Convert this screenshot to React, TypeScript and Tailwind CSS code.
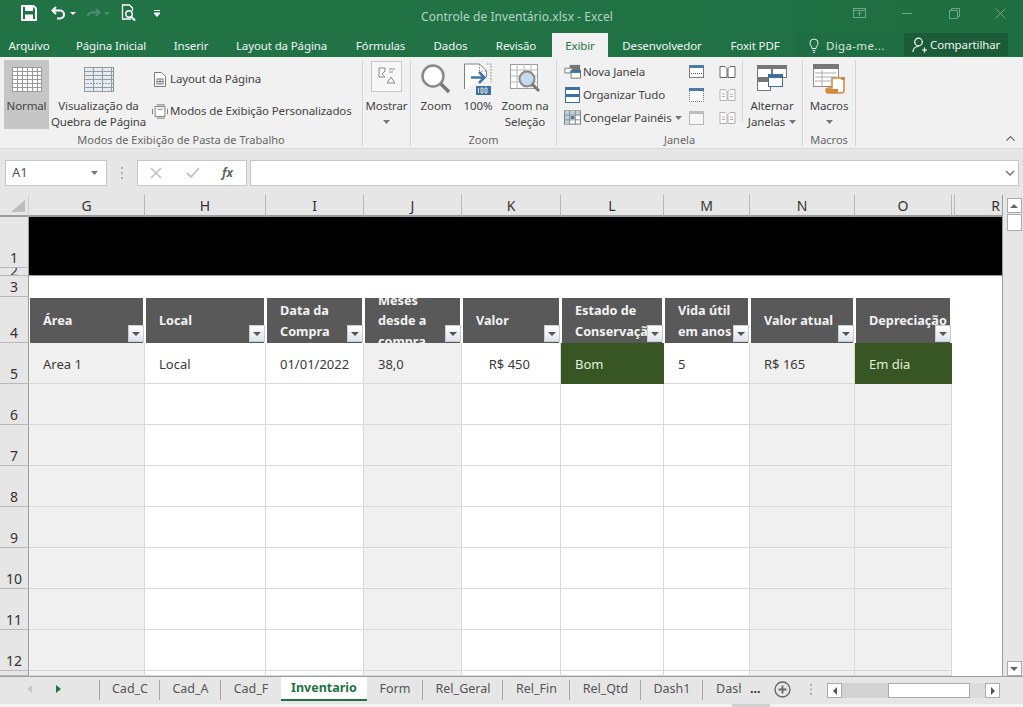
import React from "react";
import { ChevronUp } from "lucide-react";

const GRIDCOLS = "grid-cols-[29px_116px_121px_98px_98px_99px_103px_86px_105px_97px_3px_48px]";

function Caret({ className = "" }: { className?: string }) {
  return (
    <svg width="7" height="4" viewBox="0 0 7 4" className={className}>
      <path d="M0 0h7L3.5 4z" fill="#777" />
    </svg>
  );
}

function GridIcon({ dashed = false }: { dashed?: boolean }) {
  const hs = [0, 4, 8, 12, 16, 20, 24];
  const vs = dashed ? [0, 9, 18, 27] : [0, 5, 10, 15, 20, 25, 29];
  return (
    <svg width="30" height="25" viewBox="0 0 30 25">
      <rect x="0.5" y="0.5" width="29" height="24" fill={dashed ? "#e4edf5" : "#fff"} stroke="#8c8c8c" />
      {hs.map((y) => (
        <line key={y} x1="0" x2="30" y1={y + 0.5} y2={y + 0.5} stroke="#9a9a9a" strokeDasharray={dashed && y === 16 ? "2 1" : undefined} />
      ))}
      {vs.map((x) => (
        <line key={x} x1={x + 0.5} x2={x + 0.5} y1="0" y2="25" stroke="#9a9a9a" />
      ))}
    </svg>
  );
}

function BigButton({ w, icon, lines, caret, inlineCaret, active, className = "" }: { w: string; icon: React.ReactNode; lines: string[]; caret?: boolean; inlineCaret?: boolean; active?: boolean; className?: string }) {
  return (
    <div className={`${w} ${className} flex flex-col items-center h-[69px] ${active ? "bg-[#c6c6c6]" : ""}`}>
      <div className="h-[38px] flex items-center justify-center shrink-0">{icon}</div>
      {lines.map((l, i) => (
        <div key={l} className="leading-4 whitespace-nowrap flex items-center">
          {l}
          {inlineCaret && i === lines.length - 1 && <Caret className="ml-[4px]" />}
        </div>
      ))}
      {caret && <Caret className="mt-[6px]" />}
    </div>
  );
}

function Group({ w, label, children }: { w: string; label: string; children: React.ReactNode }) {
  return (
    <div className={`${w} shrink-0 flex flex-col border-r border-[#d6d6d6] mt-[3px] mb-[2px]`}>
      <div className="h-[76px] flex">{children}</div>
      <div className="h-[11px] flex items-center justify-center text-[#666] text-[11px] tracking-normal whitespace-nowrap">{label}</div>
    </div>
  );
}

function SmallRow({ icon, text, h, caret }: { icon: React.ReactNode; text: string; h: string; caret?: boolean }) {
  return (
    <div className={`${h} flex items-center whitespace-nowrap`}>
      <div className="w-[21px] flex justify-center shrink-0">{icon}</div>
      <span>{text}</span>
      {caret && <Caret className="ml-[3px]" />}
    </div>
  );
}

function WindowMini({ kind }: { kind: number }) {
  if (kind === 0)
    return (
      <svg width="15" height="13" viewBox="0 0 15 13">
        <rect x=".5" y=".5" width="14" height="12" fill="#fff" stroke="#7a7a7a" />
        <rect x="0" y="0" width="15" height="3" fill="#4f7ba6" />
        <line x1="2" x2="13" y1="8.5" y2="8.5" stroke="#555" strokeDasharray="1 1" />
      </svg>
    );
  if (kind === 1)
    return (
      <svg width="15" height="14" viewBox="0 0 15 14">
        <path d="M.5 3v10.5h14V3" fill="#fff" stroke="#777" strokeDasharray="1 1" />
        <rect x="0" y="0" width="15" height="3" fill="#4f7ba6" />
      </svg>
    );
  return (
    <svg width="15" height="14" viewBox="0 0 15 14">
      <rect x=".5" y=".5" width="14" height="13" fill="#f6f6f6" stroke="#b5b5b5" />
      <rect x="0" y="0" width="15" height="3" fill="#bdbdbd" />
    </svg>
  );
}

function BookMini({ kind }: { kind: number }) {
  const c = kind === 0 ? "#666" : "#b5adb5";
  return (
    <svg width="17" height="14" viewBox="0 0 17 14" fill="#fff" stroke={c}>
      <path d="M1 1.5h5l2 2v9H1zM9 3.5l2-2h5v11H9z" />
      {kind > 0 && <path d="M3 6h3M3 8.5h3M11 6h3M11 8.5h3" />}
    </svg>
  );
}

function FilterBtn() {
  return (
    <div className="absolute right-[1px] bottom-[1px] w-[16px] h-[17px] bg-gradient-to-b from-white to-[#dfe3ea] border border-[#c9ccd2] flex items-center justify-center">
      <svg width="8" height="4" viewBox="0 0 8 4"><path d="M0 0h8L4 4z" fill="#555" /></svg>
    </div>
  );
}

function HeadCell({ text }: { text: string[] }) {
  return (
    <div className="relative pt-[1px] pl-[1px] pr-[2px] min-w-0">
      <div className="h-[45px] bg-[#595959] text-[#f2f2f2] text-[12.7px] font-bold pl-[13px] flex flex-col justify-center overflow-hidden leading-[20.5px]">
        {text.map((t) => (
          <div key={t} className="whitespace-nowrap">{t}</div>
        ))}
      </div>
      <FilterBtn />
    </div>
  );
}

const rowHeader = "col-start-1 bg-[#e6e6e6] border-r border-b border-r-[#9c9c9c] border-b-[#b8b8b8] flex items-end justify-center overflow-hidden text-[#333] text-[14px] leading-[18px] font-['Open_Sans',sans-serif] min-h-0";

const shade = [true, false, false, true, false, false, false, true, true];

function BodyCell({ i, children, right, green }: { i: number; children?: React.ReactNode; right?: boolean; green?: boolean }) {
  const bg = green ? "bg-[#375623] text-[#e2efda] border-[#375623]" : shade[i] ? "bg-[#f0f0f0] border-[#d9d9d9]" : "bg-white border-[#d9d9d9]";
  return (
    <div className={`${bg} border-r border-b flex items-center overflow-hidden pt-[3px] ${right ? "justify-end pr-[30px]" : "pl-[14px]"}`}>{children}</div>
  );
}

const tabs = [
  { t: "Cad_C", w: "w-[60px]", sep: true },
  { t: "Cad_A", w: "w-[61px]", sep: true },
  { t: "Cad_F", w: "w-[60px]" },
  { t: "Inventario", w: "w-[86px]", active: true },
  { t: "Form", w: "w-[56px]", sep: true },
  { t: "Rel_Geral", w: "w-[80px]", sep: true },
  { t: "Rel_Fin", w: "w-[67px]", sep: true },
  { t: "Rel_Qtd", w: "w-[71px]", sep: true },
  { t: "Dash1", w: "w-[62px]", sep: true },
];

const ribbonTabs = [
  { t: "Arquivo", w: "w-[58px]" },
  { t: "Página Inicial", w: "w-[106px]" },
  { t: "Inserir", w: "w-[54px]" },
  { t: "Layout da Página", w: "w-[127px]" },
  { t: "Fórmulas", w: "w-[71px]" },
  { t: "Dados", w: "w-[69px]" },
  { t: "Revisão", w: "w-[62px] mr-[5px]" },
  { t: "Exibir", w: "w-[56px] bg-[#f1f1f1] text-[#217346]" },
  { t: "Desenvolvedor", w: "w-[108px]" },
  { t: "Foxit PDF", w: "w-[78px]" },
];

export default function App() {
  return (
    <div className="w-[1023px] h-[707px] overflow-hidden flex flex-col bg-[#e6e6e6] text-[11.5px] tracking-[-0.12px] text-[#444] font-['Open_Sans',sans-serif]">
      {/* title bar */}
      <div className="h-[33px] shrink-0 flex items-center bg-gradient-to-r from-[#217346] via-[#217346] to-[#1e6e42]">
        <div className="w-[421px] shrink-0 flex items-center pb-[7px]">
          <svg width="16" height="16" viewBox="0 0 16 16" className="ml-[21px]">
            <path d="M1 1h11.5L15 3.5V15H1z" fill="none" stroke="#fff" strokeWidth="2" />
            <rect x="4" y="2" width="8" height="4" fill="#fff" />
            <rect x="4" y="9.5" width="8" height="5" fill="#fff" />
          </svg>
          <svg width="16" height="14" viewBox="0 0 16 14" className="ml-[14px]">
            <path d="M5 1 1.5 4.5 5 8M2 4.5h7a4 4 0 0 1 0 8H6" fill="none" stroke="#fff" strokeWidth="2" />
          </svg>
          <svg width="6" height="3" viewBox="0 0 6 3" className="ml-[3px]"><path d="M0 0h6L3 3z" fill="#fff" /></svg>
          <svg width="16" height="14" viewBox="0 0 16 14" className="ml-[9px]">
            <path d="M11 3l3.5 3.5L11 10M14 6.5H7a4 4 0 0 0-4 4" fill="none" stroke="#4d9070" strokeWidth="2" />
          </svg>
          <svg width="6" height="3" viewBox="0 0 6 3" className="ml-[3px]"><path d="M0 0h6L3 3z" fill="#4d9070" /></svg>
          <svg width="16" height="18" viewBox="0 0 16 18" className="ml-[11px]">
            <path d="M10 15H1.5V1h7l3 3v3" fill="none" stroke="#fff" strokeWidth="1.3" />
            <circle cx="8" cy="10" r="3.2" fill="none" stroke="#fff" strokeWidth="1.4" />
            <path d="M10 12.5l4 4" stroke="#fff" strokeWidth="2" />
          </svg>
          <svg width="6" height="7" viewBox="0 0 6 7" className="ml-[17px]">
            <path d="M0 .5h6M0 3h6L3 6.5 0 3z" stroke="#fff" fill="#fff" strokeWidth="1" />
          </svg>
        </div>
        <div className="text-[#b5d3c3] text-[12px] tracking-[0.05px] whitespace-nowrap">Controle de Inventário.xlsx - Excel</div>
        <div className="flex-1 flex items-center justify-end pb-[7px]">
          <svg width="14" height="11" viewBox="0 0 14 11" fill="none" stroke="#6fa588" className="mr-[35px]">
            <rect x=".5" y=".5" width="12" height="9" />
            <path d="M.5 2.5h12M6.5 8V4M4.5 6l2-2 2 2" />
          </svg>
          <div className="w-[10px] h-px bg-[#6fa588] mr-[37px]" />
          <svg width="11" height="11" viewBox="0 0 11 11" fill="none" stroke="#6fa588" className="mr-[35px]">
            <path d="M.5 2.5h8v8h-8zM2.5 2.5v-2h8v8h-2" />
          </svg>
          <svg width="11" height="11" viewBox="0 0 11 11" stroke="#6fa588" className="mr-[17px]">
            <path d="M.5.5l10 10M10.5.5l-10 10" />
          </svg>
        </div>
      </div>
      {/* ribbon tabs */}
      <div className="h-[24px] shrink-0 flex bg-gradient-to-r from-[#217346] via-[#217346] to-[#1e6e42] text-[#eef5f1]">
        {ribbonTabs.map((r) => (
          <div key={r.t} className={`${r.w} flex items-center justify-center whitespace-nowrap pt-[1px]`}>{r.t}</div>
        ))}
        <div className="w-[101px] flex items-center pl-[15px] text-[#d5e6dc] bg-[#1f6e43]">
          <svg width="10" height="15" viewBox="0 0 10 15" fill="none" stroke="#e6f0ea" className="mr-[7px]">
            <path d="M3 10.5C3 8.5 1 7.500 1 5a4 4 0 0 1 8 0c0 2.500-2 3.500-2 5.500zM3.500 12.500h3M4 14.500h2" />
          </svg>
          <span className="whitespace-nowrap tracking-[0.35px] pt-[1px]">Diga-me...</span>
        </div>
        <div className="w-[104px] ml-[9px] h-[23px] bg-[#1a5c38] flex items-center pl-[8px] text-[#eef5f1]">
          <svg width="15" height="16" viewBox="0 0 15 16" fill="none" stroke="#fff" strokeWidth="1.2" className="mr-[3px]">
            <circle cx="6.500" cy="5" r="3.800" />
            <path d="M1 15c0-3 2-5.500 5.500-5.500M10 13h5M12.500 10.500v5" />
          </svg>
          <span className="whitespace-nowrap">Compartilhar</span>
        </div>
      </div>
      {/* ribbon */}
      <div className="h-[92px] shrink-0 flex bg-[#f1f1f1] border-b border-[#dadada] relative">
        <Group w="w-[363px]" label="Modos de Exibição de Pasta de Trabalho">
          <BigButton w="w-[45px]" className="ml-[4px]" active icon={<GridIcon />} lines={["Normal"]} />
          <BigButton w="w-[97px]" className="ml-[1px]" icon={<GridIcon dashed />} lines={["Visualização da", "Quebra de Página"]} />
          <div className="ml-[2px] pt-[3px]">
            <SmallRow
              h="h-[32px]"
              icon={
                <svg width="12" height="15" viewBox="0 0 12 15" fill="#fff" stroke="#7a7a7a">
                  <path d="M.5.5h7l4 4v10H.5z" />
                  <rect x="3" y="7" width="6" height="5" fill="none" />
                  <path d="M6 7v5M3 9.500h6" />
                </svg>
              }
              text="Layout da Página"
            />
            <SmallRow
              h="h-[32px]"
              icon={
                <svg width="16" height="15" viewBox="0 0 18 16" fill="none" stroke="#6f6f6f">
                  <rect x="3.500" y="2.500" width="11" height="11" fill="#fff" />
                  <path d="M5.500.5h9M5.500 15.500h9M.5 5v6M17.500 5v6M6 5.500h6" />
                </svg>
              }
              text="Modos de Exibição Personalizados"
            />
          </div>
        </Group>
        <Group w="w-[48px]" label="">
          <BigButton
            w="w-[47px]"
            caret
            icon={
              <div className="w-[31px] h-[31px] bg-[#f7f7f7] border border-[#c8c8c8] flex items-center justify-center mt-[-6px]">
                <svg width="18" height="18" viewBox="0 0 18 18" fill="none" stroke="#8a8a8a">
                  <path d="M1 1h6v3l-3 3 3 3H1zM11 2h6M11 5h4M13 10l4 6H9z" />
                </svg>
              </div>
            }
            lines={["Mostrar"]}
          />
        </Group>
        <Group w="w-[146px]" label="Zoom">
          <BigButton
            w="w-[44px]"
            className="ml-[3px]"
            icon={
              <svg width="30" height="30" viewBox="0 0 30 30" fill="none">
                <circle cx="12" cy="12" r="10.500" fill="#fff" stroke="#8a8a8a" strokeWidth="2.500" />
                <path d="M20 20l8 8" stroke="#777" strokeWidth="3.500" />
              </svg>
            }
            lines={["Zoom"]}
          />
          <BigButton
            w="w-[40px]"
            icon={
              <svg width="28" height="32" viewBox="0 0 28 32" fill="none">
                <path d="M.5 26V1h15l7 7v6" fill="#fff" stroke="#808080" />
                <path d="M15.500 1v7h7M23 1h4v18" stroke="#808080" strokeDasharray="1.500 1.500" />
                <path d="M7 14.500h13M15 9l5.500 5.500L15 20" stroke="#3f78a8" strokeWidth="2.500" />
                <rect x="12" y="23" width="15" height="9" fill="#3f6f9f" />
                <path d="M14.500 25v5M17 25h2v5h-2zM21 25h2v5h-2z" stroke="#fff" strokeWidth=".8" />
              </svg>
            }
            lines={["100%"]}
          />
          <BigButton
            w="w-[54px]"
            icon={
              <svg width="31" height="30" viewBox="0 0 31 30" fill="none">
                <rect x=".5" y=".5" width="27" height="24" fill="#fff" stroke="#9a9a9a" />
                <path d="M.5 6h27M.5 12h27M.5 18h27M7 0v25M14 0v25M21 0v25" stroke="#b8b8b8" />
                <circle cx="17" cy="15" r="7.500" fill="#c8daea" stroke="#888" strokeWidth="2" />
                <path d="M22 20l7 7" stroke="#777" strokeWidth="3" />
              </svg>
            }
            lines={["Zoom na", "Seleção"]}
          />
        </Group>
        <Group w="w-[246px]" label="Janela">
          <div className="w-[126px] ml-[5px] shrink-0">
            <SmallRow
              h="h-[23px]"
              icon={
                <svg width="17" height="15" viewBox="0 0 18 15">
                  <rect x="6" y=".5" width="11" height="6" fill="#777" />
                  <rect x="1" y="4" width="8" height="5" fill="#fff" stroke="#777" />
                  <rect x="7.500" y="6.500" width="10" height="8" fill="#fff" stroke="#777" />
                  <rect x="7" y="6" width="11" height="3" fill="#3f6f9f" />
                </svg>
              }
              text="Nova Janela"
            />
            <SmallRow
              h="h-[23px]"
              icon={
                <svg width="15" height="16" viewBox="0 0 15 16">
                  <rect x=".5" y=".5" width="14" height="15" fill="#fff" stroke="#3f6f9f" />
                  <rect x="0" y="0" width="15" height="3" fill="#3f6f9f" />
                  <rect x="0" y="7" width="15" height="3" fill="#3f6f9f" />
                </svg>
              }
              text="Organizar Tudo"
            />
            <SmallRow
              h="h-[23px]"
              caret
              icon={
                <svg width="17" height="15" viewBox="0 0 18 15">
                  <rect x=".5" y=".5" width="17" height="14" fill="#fff" stroke="#777" />
                  <rect x="1" y="1" width="16" height="4" fill="#bcd0e0" />
                  <rect x="1" y="1" width="5" height="13" fill="#bcd0e0" />
                  <path d="M0 5h18M6 0v15M12 0v15M0 10h18" stroke="#888" />
                  <rect x="7" y="6" width="4" height="3" fill="#3f6f9f" />
                </svg>
              }
              text="Congelar Painéis"
            />
          </div>
          <div className="w-[31px] shrink-0 flex flex-col items-start">
            {[0, 1, 2].map((k) => (
              <div key={k} className="h-[23px] flex items-center pl-[1px]"><WindowMini kind={k} /></div>
            ))}
          </div>
          <div className="w-[23px] shrink-0 flex flex-col items-start">
            {[0, 1, 2].map((k) => (
              <div key={k} className="h-[23px] flex items-center"><BookMini kind={k} /></div>
            ))}
          </div>
          <div className="w-px h-[62px] bg-[#d6d6d6] shrink-0" />
          <BigButton
            w="w-[58px]"
            inlineCaret
            icon={
              <svg width="30" height="26" viewBox="0 0 30 26" className="mt-[-3px]">
                <rect x=".5" y=".5" width="14" height="12" fill="#fff" stroke="#777" />
                <rect x="0" y="0" width="15" height="4" fill="#777" />
                <rect x="15.500" y=".5" width="14" height="12" fill="#fff" stroke="#777" />
                <rect x="15" y="0" width="15" height="4" fill="#777" />
                <rect x=".5" y="13.500" width="13" height="12" fill="#fff" stroke="#777" />
                <rect x="0" y="13" width="14" height="4" fill="#777" />
                <rect x="11.500" y="9.500" width="14" height="12" fill="#fff" stroke="#3f6f9f" />
                <rect x="11" y="9" width="15" height="4" fill="#3f6f9f" />
              </svg>
            }
            lines={["Alternar", "Janelas"]}
          />
        </Group>
        <Group w="w-[53px]" label="Macros">
          <BigButton
            w="w-[52px]"
            caret
            icon={
              <svg width="32" height="30" viewBox="0 0 32 30">
                <rect x=".5" y=".5" width="25" height="22" fill="#fff" stroke="#8a8a8a" />
                <rect x="0" y="0" width="26" height="5" fill="#777" />
                <path d="M2 9h21M2 13h21M2 17h21M9 6v16" stroke="#aaa" />
                <path d="M19 14h12v12c0 2-1 3-3 3H16c-2 0-3-1-3-2.500S14 24 16 24h3z" fill="#fff" stroke="#d5873c" strokeWidth="1.500" />
                <rect x="14" y="25" width="11" height="4" fill="#d5873c" />
                <rect x="28" y="13" width="4" height="3" fill="#d5873c" />
              </svg>
            }
            lines={["Macros"]}
          />
        </Group>
        <div className="absolute right-[5px] bottom-[2px]"><ChevronUp size={15} strokeWidth={2} color="#666" /></div>
      </div>
      {/* formula bar */}
      <div className="h-[46px] shrink-0 pt-[11px] flex items-start bg-[#e6e6e6] text-[#555] text-[13px] tracking-normal">
        <div className="ml-[5px] w-[102px] h-[26px] bg-white border border-[#c6c6c6] flex items-center justify-between px-[6px]">
          <span>A1</span>
          <Caret className="mr-[2px]" />
        </div>
        <div className="w-[30px] flex justify-center pt-[7px]">
          <svg width="3" height="12" viewBox="0 0 3 12" fill="#b0b0b0"><rect y="0" width="2" height="2" /><rect y="5" width="2" height="2" /><rect y="10" width="2" height="2" /></svg>
        </div>
        <div className="w-[110px] h-[26px] bg-white border border-[#c6c6c6] flex items-center">
          <svg width="12" height="12" viewBox="0 0 12 12" stroke="#c0c0c0" strokeWidth="1.600" className="ml-[12px]"><path d="M1 1l10 10M11 1L1 11" /></svg>
          <svg width="14" height="12" viewBox="0 0 14 12" stroke="#c0c0c0" strokeWidth="1.800" fill="none" className="ml-[24px]"><path d="M1 6l4 4 8-9" /></svg>
          <span className="ml-[22px] italic font-bold text-[12px] text-[#666] font-['Liberation_Serif',serif]">fx</span>
        </div>
        <div className="ml-[3px] w-[769px] h-[26px] bg-white border border-[#c6c6c6] flex items-center justify-end pr-[3px]">
          <svg width="10" height="6" viewBox="0 0 10 6" fill="none" stroke="#777" strokeWidth="1.500"><path d="M1 1l4 4 4-4" /></svg>
        </div>
      </div>
      {/* sheet */}
      <div className="h-[481px] shrink-0 flex">
        <div className={`w-[1003px] shrink-0 grid ${GRIDCOLS} grid-rows-[22px_51px_8px_21px_46px_repeat(8,41px)_5px] overflow-hidden border-r border-[#9c9c9c] bg-white text-[13px] tracking-normal text-[#3a3a3a] font-['Lato',sans-serif]`}>
          {/* column headers */}
          <div className="bg-[#e6e6e6] border-r border-[#d0d0d0] border-b-2 border-b-[#9c9c9c] flex items-end justify-end pr-[3px] pb-[3px]">
            <svg width="14" height="12" viewBox="0 0 14 12"><path d="M14 0v12H0z" fill="#bdbdbd" /></svg>
          </div>
          {["G", "H", "I", "J", "K", "L", "M", "N", "O", "", "R"].map((c, i) => (
            <div key={i} className={`bg-[#e6e6e6] border-r border-[#b8b8b8] border-b-2 border-b-[#9c9c9c] flex items-center overflow-hidden text-[14px] text-[#333] font-['Open_Sans',sans-serif] ${c === "R" ? "justify-end pr-[3px] border-r-0" : "justify-center"}`}>{c}</div>
          ))}
          {/* row 1-2 */}
          <div className={rowHeader}>1</div>
          <div className="col-start-2 col-span-11 row-span-2 bg-black border-b border-[#9c9c9c]" />
          <div className={`${rowHeader} items-start`}><span className="leading-[6px]">2</span></div>
          {/* row 3 */}
          <div className={rowHeader}>3</div>
          <div className="col-start-2 col-span-11 bg-white" />
          {/* row 4 */}
          <div className={rowHeader}>4</div>
          <HeadCell text={["Área"]} />
          <HeadCell text={["Local"]} />
          <HeadCell text={["Data da", "Compra"]} />
          <HeadCell text={["Meses", "desde a", "compra"]} />
          <HeadCell text={["Valor"]} />
          <HeadCell text={["Estado de", "Conservação"]} />
          <HeadCell text={["Vida útil", "em anos"]} />
          <HeadCell text={["Valor atual"]} />
          <HeadCell text={["Depreciação"]} />
          <div className="col-span-2" />
          {/* row 5 */}
          <div className={rowHeader}>5</div>
          <BodyCell i={0}>Area 1</BodyCell>
          <BodyCell i={1}>Local</BodyCell>
          <BodyCell i={2}>01/01/2022</BodyCell>
          <BodyCell i={3}>38,0</BodyCell>
          <BodyCell i={4} right>R$ 450</BodyCell>
          <BodyCell i={5} green>Bom</BodyCell>
          <BodyCell i={6}>5</BodyCell>
          <BodyCell i={7}>R$ 165</BodyCell>
          <BodyCell i={8} green>Em dia</BodyCell>
          <div className="col-span-2" />
          {/* rows 6-13 */}
          {["6", "7", "8", "9", "10", "11", "12", ""].map((n) => (
            <React.Fragment key={n}>
              <div className={rowHeader}>{n}</div>
              {shade.map((_, i) => (
                <BodyCell key={i} i={i} />
              ))}
              <div className="col-span-2" />
            </React.Fragment>
          ))}
        </div>
        {/* vertical scrollbar */}
        <div className="flex-1 bg-[#e6e6e6] flex flex-col items-center pt-[3px] pl-[2px] h-full">
          <div className="w-[15px] h-[15px] bg-white border border-[#ababab] flex items-center justify-center">
            <svg width="8" height="4" viewBox="0 0 8 4"><path d="M0 4h8L4 0z" fill="#666" /></svg>
          </div>
          <div className="w-[15px] h-[17px] mt-[1px] bg-white border border-[#ababab]" />
          <div className="flex-1" />
          <div className="w-[15px] h-[15px] bg-white border border-[#ababab] flex items-center justify-center">
            <svg width="8" height="4" viewBox="0 0 8 4"><path d="M0 0h8L4 4z" fill="#666" /></svg>
          </div>
        </div>
      </div>
      {/* sheet tabs */}
      <div className="h-[28px] shrink-0 flex items-start bg-[#e6e6e6] border-t border-[#9c9c9c] text-[12.5px] tracking-normal text-[#555]">
        <div className="w-[99px] h-[24px] shrink-0 flex items-center">
          <svg width="5" height="8" viewBox="0 0 5 8" className="ml-[27px]"><path d="M5 0v8L0 4z" fill="#c8c8c8" /></svg>
          <svg width="5" height="8" viewBox="0 0 5 8" className="ml-[24px]"><path d="M0 0v8l5-4z" fill="#217346" /></svg>
        </div>
        <div className="w-px h-[20px] bg-[#a8a8a8] mt-[3px] shrink-0" />
        {tabs.map((t) => (
          <div
            key={t.t}
            className={`${t.w} shrink-0 h-[24px] flex items-center justify-center whitespace-nowrap relative ${t.active ? "bg-white font-bold text-[#217346] border-b-2 border-[#217346]" : ""}`}
          >
            {t.t}
            {t.sep && <div className="absolute right-0 top-[3px] w-px h-[20px] bg-[#a8a8a8]" />}
          </div>
        ))}
        <div className="w-[62px] h-[24px] pl-[13px] flex items-center whitespace-nowrap shrink-0">
          <span className="w-[25px] overflow-hidden shrink-0">Dash2</span>
          <span className="ml-[9px] font-bold text-[#333]">...</span>
        </div>
        <div className="w-[62px] h-[24px] flex items-center shrink-0 pl-[9px]">
          <svg width="17" height="17" viewBox="0 0 17 17" fill="none" stroke="#666" strokeWidth="1.300">
            <circle cx="8.500" cy="8.500" r="7.500" />
            <path d="M8.500 4.500v8M4.500 8.500h8" strokeWidth="1.800" />
          </svg>
          <svg width="3" height="11" viewBox="0 0 3 11" fill="#b0b0b0" className="ml-[19px]"><rect width="2" height="2" /><rect y="4.500" width="2" height="2" /><rect y="9" width="2" height="2" /></svg>
        </div>
        <div className="flex items-center h-[15px] mt-[6px] shrink-0">
          <div className="w-[15px] h-[15px] bg-white border border-[#ababab] flex items-center justify-center">
            <svg width="4" height="8" viewBox="0 0 4 8"><path d="M4 0v8L0 4z" fill="#555" /></svg>
          </div>
          <div className="w-[46px] h-[15px] bg-[#d2d2d2]" />
          <div className="w-[82px] h-[15px] bg-white border border-[#ababab]" />
          <div className="w-[15px] h-[15px] bg-[#dcdcdc]" />
          <div className="w-[15px] h-[15px] bg-white border border-[#ababab] flex items-center justify-center">
            <svg width="4" height="8" viewBox="0 0 4 8"><path d="M0 0v8l4-4z" fill="#555" /></svg>
          </div>
        </div>
      </div>
      <div className="h-[3px] shrink-0 bg-[#f3f3f3]">
        <div className="ml-[732px] w-[38px] h-full bg-[#d0d0d0]" />
      </div>
    </div>
  );
}
